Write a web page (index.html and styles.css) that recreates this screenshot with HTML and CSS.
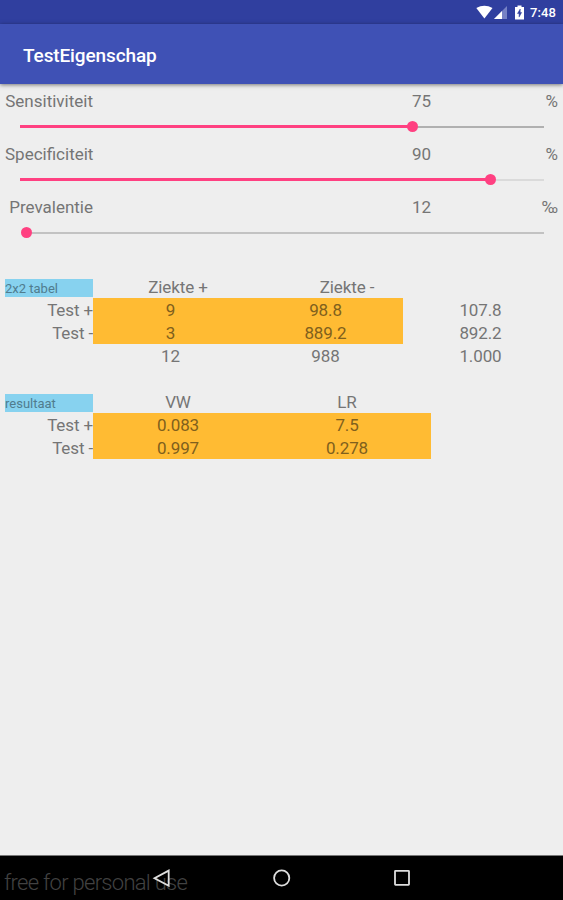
FILE: index.html
```html
<!DOCTYPE html>
<html lang="nl">
<head>
<meta charset="utf-8">
<title>TestEigenschap</title>
<link rel="stylesheet" href="styles.css">
</head>
<body>
<div class="statusbar">
  <svg class="wifi" width="17" height="14" viewBox="0 0 17 14"><path d="M.3 3Q8.3-1.6 16.5 3L8.4 13.4Z" fill="#fff"/></svg>
  <svg class="signal" width="14" height="14" viewBox="0 0 14 14"><path d="M13 1V14H0Z" fill="#7681c5"/><path d="M8 6V14H0Z" fill="#fff"/></svg>
  <svg class="battery" width="9" height="15" viewBox="0 0 9 15"><path d="M2.5 .5h4V2H9V14.5H0V2h2.5Z" fill="#fff"/><path d="M5.2 4 2.5 8.5h1.6v3.6L6.6 7.5H5.2Z" fill="#303f9f" stroke="#303f9f" stroke-width=".5"/></svg>
  <span class="clock">7:48</span>
</div>
<header class="appbar"><h1>TestEigenschap</h1></header>
<main>
  <section class="setting">
    <div class="setting-row"><span class="label">Sensitiviteit</span><span class="value">75</span><span class="unit">%</span></div>
    <div class="slider"><span class="fill" style="width:392px"></span><span class="thumb"></span><span class="rest"></span></div>
  </section>
  <section class="setting">
    <div class="setting-row"><span class="label">Specificiteit</span><span class="value">90</span><span class="unit">%</span></div>
    <div class="slider light"><span class="fill" style="width:470.5px"></span><span class="thumb"></span><span class="rest"></span></div>
  </section>
  <section class="setting">
    <div class="setting-row"><span class="label">Prevalentie</span><span class="value">12</span><span class="unit">‰</span></div>
    <div class="slider thick"><span class="fill" style="width:6px"></span><span class="thumb"></span><span class="rest"></span></div>
  </section>

  <section class="table counts">
    <div class="row head"><span class="tag">2x2 tabel</span><span class="wide">Ziekte +</span><span class="wide">Ziekte -</span></div>
    <div class="row"><span class="name">Test +</span><span class="cell hot">9</span><span class="cell hot">98.8</span><span class="cell">107.8</span></div>
    <div class="row"><span class="name">Test -</span><span class="cell hot">3</span><span class="cell hot">889.2</span><span class="cell">892.2</span></div>
    <div class="row"><span class="name"></span><span class="cell">12</span><span class="cell">988</span><span class="cell">1.000</span></div>
  </section>
  <section class="table results">
    <div class="row head"><span class="tag">resultaat</span><span class="wide">VW</span><span class="wide">LR</span></div>
    <div class="row"><span class="name">Test +</span><span class="wide hot">0.083</span><span class="wide hot">7.5</span></div>
    <div class="row"><span class="name">Test -</span><span class="wide hot">0.997</span><span class="wide hot">0.278</span></div>
  </section>
</main>
<footer class="navbar">
  <span class="notice">free for personal use</span>
  <svg class="keys" width="563" height="44" viewBox="0 0 563 44" fill="none" stroke="#dedede" stroke-width="1.8"><path d="M168.7 14.6V29.8L154.5 22.2Z"/><circle cx="281.7" cy="22" r="7.6"/><rect x="395" y="14.8" width="14" height="14" rx=".5"/></svg>
</footer>
</body>
</html>
```

FILE: styles.css
```css
* { box-sizing: border-box; }
body {
  margin: 0;
  height: 900px;
  display: flex;
  flex-direction: column;
  background: #eee;
  color: #757575;
  font: 17px/23px Roboto, sans-serif;
  overflow: hidden;
}
.statusbar {
  height: 24px;
  flex: none;
  display: flex;
  align-items: flex-start;
  justify-content: flex-end;
  padding: 5px 7px 0 0;
  background: #303f9f;
  color: #fff;
}
.signal { margin-left: 1px; }
.battery { margin-left: 7px; }
.clock {
  margin-left: 6px;
  font-size: 13px;
  font-weight: 500;
  letter-spacing: .1px;
  line-height: 16px;
}
.appbar {
  height: 60px;
  flex: none;
  padding: 20px 23px 0;
  background: #3f51b5;
  box-shadow: 0 1px 4px rgba(0, 0, 0, .5);
}
h1 {
  margin: 0;
  color: #fff;
  font-size: 19px;
  font-weight: 500;
  letter-spacing: -.12px;
  line-height: 24px;
}
main { flex: 1; padding: 6px 5px 0; }
.setting { height: 53px; }
.setting-row, .row { display: flex; height: 23px; white-space: nowrap; }
.label, .name { width: 88px; flex: none; text-align: right; }
.value { width: 338px; text-align: right; }
.unit { flex: 1; text-align: right; }
.slider {
  display: flex;
  align-items: center;
  height: 11px;
  margin: 8px 14px 0 15px;
}
.slider .fill { height: 3px; background: #ff4081; }
.slider.thick .fill { background: none; }
.slider .thumb {
  width: 11px;
  height: 11px;
  flex: none;
  margin: 0 -5.5px;
  border-radius: 50%;
  background: #ff4081;
  z-index: 1;
}
.slider .rest { flex: 1; height: 2px; background: #b0b0b0; }
.slider.light .rest { background: #dadada; }
.slider.thick .rest { background: #c2c2c2; }
.table { letter-spacing: -.12px; }
.counts { margin-top: 26px; }
.results { margin-top: 23px; }
.tag {
  width: 88px;
  height: 18px;
  margin-top: 4px;
  background: #87d2ef;
  color: #507c8e;
  font-size: 13px;
  letter-spacing: 0;
  line-height: 19px;
}
.name, .cell, .wide { padding-top: 1px; }
.cell { width: 155px; text-align: center; }
.wide { width: 169px; padding-left: 1px; text-align: center; }
.hot { background: #fb3; color: #80601d; }
.navbar {
  position: relative;
  height: 45px;
  flex: none;
  border-top: 1px solid #777;
  background: #000;
}
.notice {
  display: block;
  padding: 14px 0 0 4px;
  color: #424242;
  font-size: 22px;
  font-weight: 300;
  letter-spacing: -.72px;
  line-height: 26px;
}
.keys { position: absolute; left: 0; top: 0; }
```
